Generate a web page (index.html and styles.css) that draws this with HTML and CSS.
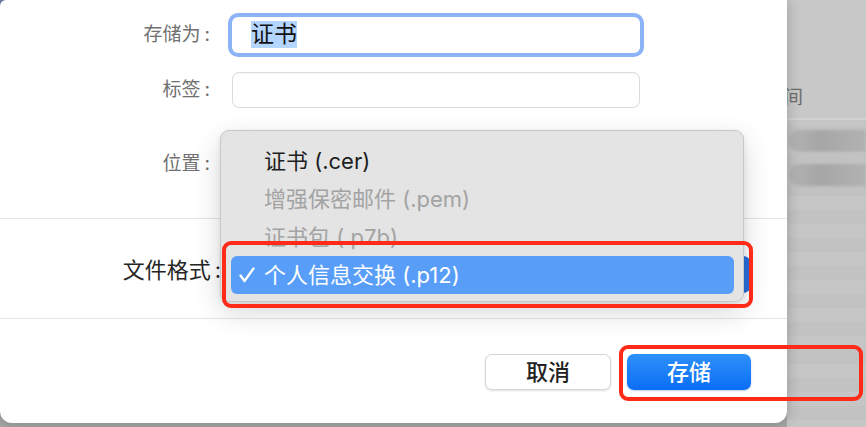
FILE: index.html
```html
<!DOCTYPE html>
<html lang="zh-CN">
<head>
<meta charset="utf-8">
<title>存储证书</title>
<link rel="stylesheet" href="styles.css">
</head>
<body>
<div class="screen">
  <div class="dialog">
    <section class="form-top">
      <div class="row">
        <span class="lbl">存储为<span class="colon">:</span></span>
        <div class="field focus"><span class="sel">证书</span></div>
      </div>
      <div class="row r2">
        <span class="lbl">标签<span class="colon">:</span></span>
        <div class="field"></div>
      </div>
      <div class="row r3">
        <span class="lbl">位置<span class="colon">:</span></span>
        <div class="field ghost"></div>
      </div>
    </section>
    <section class="form-mid">
      <span class="lbl-big">文件格式<span class="colon">:</span></span>
      <div class="popup"></div>
    </section>
    <section class="actions">
      <button class="btn">取消</button>
      <button class="btn primary">存储</button>
    </section>

    <div class="menu">
      <div class="item">证书 (.cer)</div>
      <div class="item dim">增强保密邮件 (.pem)</div>
      <div class="item dim">证书包 (.p7b)</div>
      <div class="item on">
        <svg class="check" width="18" height="18" viewBox="0 0 18 18"><polyline points="2.5,9.5 6.5,15 15.5,2.5" fill="none" stroke="#fff" stroke-width="2.3" stroke-linecap="round" stroke-linejoin="round"/></svg>
        个人信息交换 (.p12)
      </div>
    </div>

    <div class="mark mark-menu"></div>
    <div class="mark mark-save"></div>
  </div>

  <aside class="side">
    <div class="side-head">间</div>
    <div class="side-rows">
      <div class="blur b1"></div>
      <div class="blur b2"></div>
    </div>
  </aside>
</div>
</body>
</html>
```

FILE: styles.css
```css
* { box-sizing: border-box; }

html, body {
  margin: 0;
  padding: 0;
  width: 866px;
  height: 427px;
  overflow: hidden;
}

body {
  font-family: Inter, "Noto Sans CJK SC", sans-serif;
}

.screen {
  display: flex;
  align-items: flex-start;
  width: 866px;
  height: 427px;
  background: linear-gradient(135deg, #6d82a6 0 6px, #a6a6a6 6px);
}

.dialog {
  position: relative;
  flex: none;
  width: 787px;
  height: 423px;
  background: #fff;
  border-radius: 6px 0 12px 12px;
  box-shadow: 0 0 14px rgba(0, 0, 0, 0.22);
  z-index: 1;
}

.colon {
  margin-left: 4px;
}

/* top form */
.form-top {
  padding: 17px 0 36px;
  border-bottom: 1px solid #e4e4e4;
}

.row {
  display: flex;
  align-items: center;
  gap: 22px;
  height: 36px;
}

.r2 { margin-top: 19px; }
.r3 { margin-top: 38px; }

.lbl {
  width: 210px;
  text-align: right;
  font-size: 19px;
  color: #707070;
  line-height: 36px;
}

.field {
  width: 408px;
  height: 36px;
  border: 1px solid #dcdcdc;
  border-radius: 7px;
  background: #fff;
  box-shadow: inset 0 1px 1px rgba(0, 0, 0, 0.03);
}

.field.focus {
  border: none;
  box-shadow: 0 0 0 4px #8cb3f5;
  border-radius: 6px;
  padding: 4px 0 0 19px;
}

.field.ghost {
  border: none;
  box-shadow: none;
}

.sel {
  display: inline-block;
  font-size: 23px;
  line-height: 27px;
  color: #111;
  background: #b4d5fe;
}

/* middle */
.form-mid {
  display: flex;
  align-items: flex-start;
  gap: 8px;
  height: 100px;
  padding-top: 37px;
  border-bottom: 1px solid #e4e4e4;
}

.lbl-big {
  width: 221px;
  text-align: right;
  font-size: 22px;
  line-height: 29px;
  color: #262626;
}

.popup {
  width: 522px;
  height: 37px;
  border-radius: 8px;
  background: #2a6fdd;
}

/* actions */
.actions {
  display: flex;
  justify-content: flex-end;
  gap: 16px;
  padding: 35px 36px 0 0;
}

.btn {
  width: 126px;
  height: 36px;
  border: 1px solid #d6d6d6;
  border-radius: 7px;
  background: #fff;
  box-shadow: 0 1px 2px rgba(0, 0, 0, 0.12);
  font-family: Inter, "Noto Sans CJK SC", sans-serif;
  font-size: 22px;
  font-weight: 500;
  color: #222;
  padding: 0;
  line-height: 34px;
}

.btn.primary {
  width: 124px;
  border: none;
  background: linear-gradient(#2e90f9, #0b6ef5);
  color: #fff;
  box-shadow: 0 1px 2px rgba(0, 60, 160, 0.25);
}

/* dropdown menu (overlay) */
.menu {
  position: absolute;
  left: 220px;
  top: 130px;
  width: 524px;
  height: 172px;
  padding: 11px 9px 0 10px;
  background: #e4e4e4;
  border: 1px solid #c8c8c8;
  border-radius: 9px;
  box-shadow: 0 10px 28px rgba(0, 0, 0, 0.16), 0 2px 6px rgba(0, 0, 0, 0.08);
  z-index: 2;
}

.item {
  position: relative;
  height: 38px;
  line-height: 38px;
  padding-left: 33px;
  font-size: 22px;
  color: #1e1e1e;
  white-space: nowrap;
}

.item.dim { color: #a3a3a3; }

.item.on {
  background: #589ef9;
  color: #fff;
  border-radius: 6px;
}

.check {
  position: absolute;
  left: 7px;
  top: 10px;
}

/* red annotation boxes */
.mark {
  position: absolute;
  border: 4px solid #ff2a17;
  border-radius: 9px;
  z-index: 3;
}

.mark-menu {
  left: 222px;
  top: 241px;
  width: 531px;
  height: 67px;
}

.mark-save {
  left: 619px;
  top: 345px;
  width: 244px;
  height: 56px;
}

/* right background */
.side {
  flex: none;
  width: 79px;
  height: 427px;
  background: repeating-linear-gradient(180deg, #c6c6c6 0 14px, #c2c2c2 14px 28px);
}

.side-head {
  height: 120px;
  padding-top: 83px;
  margin-left: -3px;
  font-family: "Noto Sans CJK SC", sans-serif;
  font-size: 19px;
  line-height: 26px;
  color: #6e6e6e;
  background: #c8c8c8;
  border-bottom: 2px solid #d2d2d2;
}

.side-rows {
  display: flex;
  flex-direction: column;
  gap: 12px;
  padding-top: 10px;
}

.blur {
  height: 22px;
  margin-left: 2px;
  border-radius: 10px 0 0 10px;
  background: linear-gradient(90deg, #b4b4b4, #a6a6a6 40%, #acacac 70%, #b2b2b2);
  filter: blur(1.5px);
}
```
